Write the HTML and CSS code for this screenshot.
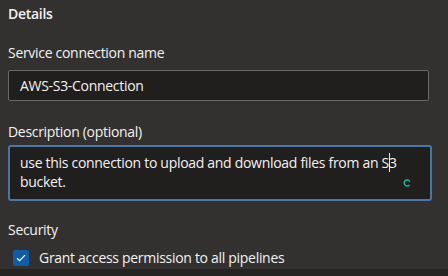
FILE: index.html
```html
<!DOCTYPE html>
<html lang="en">
<head>
    <meta charset="UTF-8">
    <meta name="viewport" content="width=device-width, initial-scale=1.0">
    <title>Service connection details</title>
    <link rel="stylesheet" href="styles.css">
</head>
<body>
    <div class="panel">
        <h3 class="section-title">Details</h3>

        <div class="field">
            <label class="field-label" for="connName">Service connection name</label>
            <div class="text-input" id="connName">AWS-S3-Connection</div>
        </div>

        <div class="field field-desc">
            <label class="field-label">Description (optional)</label>
            <div class="text-area focused" role="textbox">use this connection to upload and download files from an S<span class="cursor">3</span><br>bucket.</div>
            <svg class="spinner" width="8" height="8" viewBox="0 0 8 8">
                <path d="M6.6 2.2 A3 3 0 1 0 6.2 6.2" fill="none" stroke="#19b89a" stroke-width="1.4" stroke-linecap="round"/>
            </svg>
        </div>

        <div class="security">
            <div class="field-label">Security</div>
            <label class="checkbox-row">
                <span class="checkbox">
                    <svg width="10" height="8" viewBox="0 0 10 8">
                        <path d="M1 4.2 L3.6 6.6 L9 1.2" fill="none" stroke="#fff" stroke-width="1.2"/>
                    </svg>
                </span>
                <span>Grant access permission to all pipelines</span>
            </label>
        </div>
    </div>
    <div class="footer-band"></div>
</body>
</html>
```

FILE: styles.css
```css
body {
    margin: 0;
    background-color: #323130;
    color: #f3f2f1;
    font-family: "Open Sans", Arial, sans-serif;
    font-size: 14px;
    letter-spacing: -0.3px;
    height: 276px;
    display: flex;
    flex-direction: column;
    overflow: hidden;
}
.panel {
    flex: 1;
    padding: 4px 16px 0 8px;
}
.section-title {
    margin: 0;
    font-size: 14px;
    font-weight: 600;
    line-height: 20px;
}
.field {
    margin-top: 19px;
}
.field-label {
    display: block;
    line-height: 20px;
}
.text-input {
    margin-top: 7px;
    margin-right: 3px;
    height: 29px;
    line-height: 29px;
    padding: 0 11px;
    background-color: #201f1e;
    border: 1px solid #6b6967;
    border-radius: 2px;
}
.field-desc {
    position: relative;
    margin-top: 21px;
}
.text-area {
    margin-top: 3px;
    height: 40px;
    padding: 6px 11px 6px 10px;
    line-height: 19px;
    background-color: #201f1e;
    border: 2px solid #4a76a8;
    border-radius: 3px;
}
.cursor {
    box-shadow: inset 1px 0 0 #e8e8e8;
}
.spinner {
    position: absolute;
    right: 21px;
    bottom: 14px;
}
.security {
    margin-top: 19px;
}
.checkbox-row {
    display: flex;
    align-items: center;
    gap: 10px;
    margin-top: 8px;
    padding-left: 5px;
    line-height: 20px;
}
.checkbox {
    width: 16px;
    height: 16px;
    border-radius: 2px;
    background-color: #0f5ca8;
    display: flex;
    align-items: center;
    justify-content: center;
}
.footer-band {
    height: 7px;
    background-color: #252423;
}
```
